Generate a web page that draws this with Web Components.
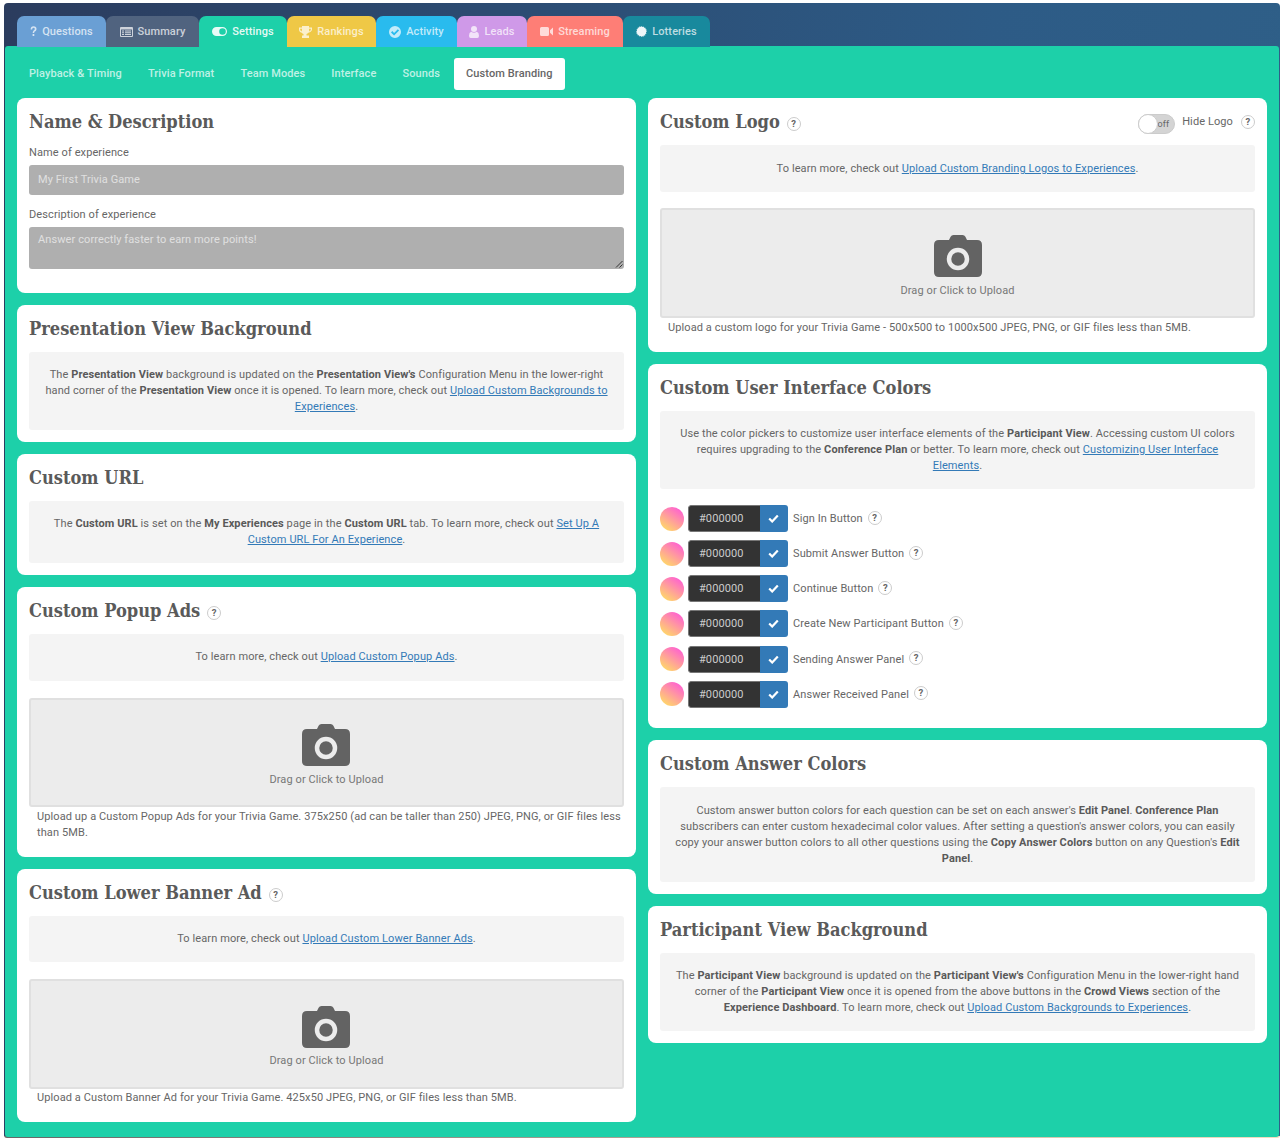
<!DOCTYPE html>
<html lang="en"><head><meta charset="utf-8"><title>Custom Branding</title>
<style>
html,body{margin:0;padding:0;background:#fff}
body{font-family:Roboto,"Liberation Sans",sans-serif;font-size:11px;color:#666;letter-spacing:.1px}
x-info b{font-weight:700;color:#595959}
x-info a{color:#337ab7;text-decoration:underline}
</style></head><body>
<template id="t-shell"><style>
:host{display:block;margin:3px 4px 0;width:1276px;box-sizing:border-box;border-radius:4px 4px 3px 3px;padding:13px 1px 1px 1px;
background:linear-gradient(to right,#666,#f2dcc0) bottom/100% 2px no-repeat,linear-gradient(97deg,#2b3c5e,#2d5b86 70%,#2f6088)}
.tabs{display:flex;padding-left:12px;height:30px}
.panel{background:#1dd0a9;border-radius:3px;padding:12px 12px 15px}
</style><div class="tabs"><slot name="tabs"></slot></div><div class="panel"><slot></slot></div></template>

<template id="t-tab"><style>
:host{display:flex;align-items:center;justify-content:center;gap:5px;height:31px;border-radius:7px 7px 0 0;box-sizing:border-box;font:500 11px/1 Roboto,sans-serif;letter-spacing:.1px;color:rgba(255,255,255,.72);background:var(--c);flex:none}
:host([active]){color:rgba(255,255,255,.9)}
::slotted(svg){display:block;fill:currentColor}
</style><slot name="icon"></slot><slot></slot></template>

<template id="t-subnav"><style>
:host{display:flex;height:32px;margin-bottom:8px}
</style><slot></slot></template>

<template id="t-subitem"><style>
:host{display:flex;align-items:center;box-sizing:border-box;padding:0 12px 2px;margin-right:2px;border-radius:3px;font:500 11px/1 Roboto,sans-serif;letter-spacing:.1px;color:rgba(255,255,255,.72);height:32px}
:host([active]){background:#fff;color:#666}
</style><slot></slot></template>

<template id="t-columns"><style>
:host{display:grid;grid-template-columns:619px 619px;gap:12px;align-items:start}
</style><slot></slot></template>

<template id="t-col"><style>
:host{display:flex;flex-direction:column;gap:12px}
</style><slot></slot></template>

<template id="t-card"><style>
:host{display:block;background:#fff;border-radius:8px;padding:12px 12px var(--pb,12px);box-sizing:border-box;height:var(--h,auto)}
header{display:flex;align-items:center;height:23px;margin-bottom:12px}
h2{margin:0;font:700 18.1px/23px "DejaVu Serif",serif;font-stretch:condensed;color:#5a5a5a;letter-spacing:0}
.help{margin-left:7px;display:flex;margin-top:4px}
.right{margin-left:auto;display:flex;align-items:center}
</style><header><h2></h2><span class="help"></span><span class="right"><slot name="right"></slot></span></header><slot></slot></template>

<template id="t-help"><style>
:host{display:inline-flex;width:14px;height:14px;box-sizing:border-box;border:1px solid #ccc;border-radius:50%;align-items:center;justify-content:center;font:700 9.5px/1 Roboto,sans-serif;color:#666;background:#fff;flex:none}
</style>?</template>

<template id="t-info"><style>
:host{display:block;background:#f4f4f4;border-radius:3px;padding:var(--it,15px) 15px var(--ib,15px);text-align:center;font-size:11px;line-height:16px;color:#666}
</style><slot></slot></template>

<template id="t-field"><style>
:host{display:block}
label{display:block;font-size:11px;line-height:15.7px;margin-bottom:var(--lm,4px);color:#666}
.box{background:#afafaf;border-radius:3px;color:#e0e0e0;font-size:11px;padding:0 9px;height:var(--fh,30px);line-height:var(--fl,30px);position:relative}
svg{position:absolute;right:1px;bottom:1px}
</style><label></label><div class="box"><slot></slot></div></template>

<template id="t-upload"><style>
:host{display:block;margin-top:var(--mt,17px)}
.drop{height:var(--dh,110px);box-sizing:border-box;background:#ececec;border:2px solid #e0e0e0;border-radius:3px;display:flex;flex-direction:column;align-items:center;color:#777;font-size:11px;padding-top:var(--dp,25px)}
svg{display:block;margin:0 var(--cx,0px) var(--sp,7px) 0}
.note{padding:0 0 0 8px;margin:var(--nt,2px) 0 var(--nb,4px);line-height:16px;color:#666}
</style><div class="drop"><svg width="48" height="42" viewBox="0 0 48 42"><path fill="#636363" d="M15 5l1.600-3.200Q17.500 0 19.500 0h9q2 0 2.900 1.800L33 5h10q5 0 5 5v27q0 5-5 5H5q-5 0-5-5V10q0-5 5-5z" /><circle cx="24" cy="24" r="9" fill="none" stroke="#ececec" stroke-width="4.500"/></svg>Drag or Click to Upload</div><div class="note"><slot></slot></div></template>

<template id="t-colors"><style>
:host{display:grid;row-gap:8.15px;margin-top:16px}
</style><slot></slot></template>

<template id="t-color"><style>
:host{display:flex;align-items:center;height:27px}
.dot{width:24px;height:24px;border-radius:50%;background:linear-gradient(215deg,#ff4fe0,#ffe95a);flex:none}
.group{display:flex;width:100px;height:27px;margin-left:4px;border-radius:3px;overflow:hidden;flex:none}
.hex{width:72px;background:#333;border:1px solid #777;border-right:0;border-radius:3px 0 0 3px;box-sizing:border-box;color:#ccc;font-size:11px;line-height:25px;padding-left:10px}
.ok{width:28px;background:#337ab7;display:flex;align-items:center;justify-content:center;padding-right:2px;box-sizing:border-box}
.lab{margin-left:5px;color:#666}
x-help{margin:0 0 2px 5px}
</style><div class="dot"></div><div class="group"><div class="hex">#000000</div><div class="ok"><svg width="11" height="9" viewBox="0 0 11 9"><path d="M1.200 4.500l3 3 5.600-6" fill="none" stroke="#fff" stroke-width="2.200"/></svg></div></div><span class="lab"><slot></slot></span><x-help></x-help></template>

<template id="t-toggle"><style>
:host{display:inline-flex;align-items:center;width:37px;height:20px;margin-top:5px;box-sizing:border-box;border:1px solid #ccc;border-radius:10px;background:#d4d4d4;position:relative;font:9px/1 Roboto,sans-serif;color:#666;justify-content:flex-end;padding-right:5px}
i{position:absolute;left:-1px;top:-1px;width:20px;height:20px;box-sizing:border-box;border:1px solid #ccc;border-radius:50%;background:#fff}
</style><i></i>off</template>

<x-shell>
  <x-tab slot="tabs" style="--c:#6a9fd4;width:89px"><svg slot="icon" viewBox="0 0 7 11" style="width:7px;height:11px"><path d="M.6 3.400Q.7.300 3.500.300q3 0 3 2.700c0 1.500-1 2-1.700 2.600q-.6.500-.6 1.300H2.700q0-1.300.8-2.100c.6-.600 1.300-.9 1.300-1.700q0-1.300-1.300-1.300Q2.200 1.800 2.100 3.500zM2.600 8h1.700v2H2.600z"/></svg>Questions</x-tab>
  <x-tab slot="tabs" style="--c:#50637f;width:93px"><svg slot="icon" viewBox="0 0 13 10" style="width:13px;height:10px"><path fill-rule="evenodd" d="M1 0h11q1 0 1 1v8q0 1-1 1H1q-1 0-1-1V1q0-1 1-1zM1 2.500V9h11V2.500zM2 3.500h2v1H2zM5 3.500h6v1H5zM2 5.300h2v1H2zM5 5.300h6v1H5zM2 7h2v1H2zM5 7h6v1H5z"/></svg>Summary</x-tab>
  <x-tab slot="tabs" active style="--c:#1dd0a9;width:88px"><svg slot="icon" viewBox="0 0 15 9" style="width:15px;height:9px"><path fill-rule="evenodd" d="M4.500 0h6a4.500 4.500 0 0 1 0 9h-6a4.500 4.500 0 0 1 0-9zM10.500 1.200a3.300 3.300 0 1 0 0 6.600 3.300 3.300 0 0 0 0-6.600z"/></svg>Settings</x-tab>
  <x-tab slot="tabs" style="--c:#efc846;width:89px"><svg slot="icon" viewBox="0 0 13 12" style="width:13px;height:12px"><path fill-rule="evenodd" d="M3 0h7v1.500h3v1.700c0 1.800-1.500 3.200-3.700 3.500-.4.600-1 1-1.800 1.300v1.600H10V12H3v-2.400h1.500V8C3.700 7.700 3.100 7.300 2.700 6.700.8 6.400 0 5 0 3.200V1.500h3zM1.200 2.700v.6c0 1 .5 1.800 1.500 2.100Q2.900 4 3 2.700zM11.800 2.700H10q.1 1.300.3 2.700c1-.3 1.500-1.100 1.500-2.100z"/></svg>Rankings</x-tab>
  <x-tab slot="tabs" style="--c:#29bbee;width:81px"><svg slot="icon" viewBox="0 0 12 12" style="width:12px;height:12px"><path fill-rule="evenodd" d="M6 0a6 6 0 1 1 0 12A6 6 0 0 1 6 0zM5.100 9.500l5-5-1.300-1.300-3.700 3.700-1.800-1.800-1.300 1.300z"/></svg>Activity</x-tab>
  <x-tab slot="tabs" style="--c:#cf99e8;width:70px"><svg slot="icon" viewBox="0 0 10 12" style="width:10px;height:12px"><circle cx="5" cy="3" r="3"/><path d="M2.200 5.800Q5 7.800 7.800 5.800 10 6.500 10 9.800 10 12 8.300 12H1.700Q0 12 0 9.800 0 6.500 2.200 5.800z"/></svg>Leads</x-tab>
  <x-tab slot="tabs" style="--c:#fe7e76;width:96px"><svg slot="icon" viewBox="0 0 13 9" style="width:13px;height:9px"><path d="M1.500 0h6Q9 0 9 1.500v6Q9 9 7.500 9h-6Q0 9 0 7.500v-6Q0 0 1.500 0zM10 3.300L13 .6v7.800L10 5.700z"/></svg>Streaming</x-tab>
  <x-tab slot="tabs" style="--c:#18899d;width:87px"><svg slot="icon" viewBox="0 0 12 12" style="width:11px;height:11px"><circle cx="6" cy="6" r="5.100"/><path d="M6 0l1 1.200L8.400.5l.6 1.500 1.500-.1-.1 1.500 1.500.6-.7 1.400L12 6l-1.200 1 .7 1.400-1.500.6.100 1.500-1.500-.1-.6 1.500L7 11.100 6 12l-1-1.200-1.400.7L3 10l-1.500.1L1.600 8.600.1 8 .8 6.600 0 6l1.200-1L.5 3.600 2 3 1.900 1.500l1.500.1L4 .1 5 1.200z"/></svg>Lotteries</x-tab>

  <x-subnav>
    <x-subitem>Playback &amp; Timing</x-subitem><x-subitem>Trivia Format</x-subitem><x-subitem>Team Modes</x-subitem><x-subitem>Interface</x-subitem><x-subitem>Sounds</x-subitem><x-subitem active>Custom Branding</x-subitem>
  </x-subnav>

  <x-columns>
    <x-col>
      <x-card heading="Name &amp; Description" style="--h:195px">
        <x-field label="Name of experience">My First Trivia Game</x-field>
        <x-field label="Description of experience" area style="--fh:42px;--fl:25px;--lm:5px;margin-top:12px">Answer correctly faster to earn more points!</x-field>
      </x-card>
      <x-card heading="Presentation View Background">
        <x-info>The <b>Presentation View</b> background is updated on the <b>Presentation View's</b> Configuration Menu in the lower-right hand corner of the <b>Presentation View</b> once it is opened. To learn more, check out <a href="#">Upload Custom Backgrounds to Experiences</a>.</x-info>
      </x-card>
      <x-card heading="Custom URL">
        <x-info>The <b>Custom URL</b> is set on the <b>My Experiences</b> page in the <b>Custom URL</b> tab. To learn more, check out <a href="#">Set Up A Custom URL For An Experience</a>.</x-info>
      </x-card>
      <x-card heading="Custom Popup Ads" help>
        <x-info style="--ib:16px">To learn more, check out <a href="#">Upload Custom Popup Ads</a>.</x-info>
        <x-upload style="--dh:109px;--dp:24px;--cx:1px">Upload up a Custom Popup Ads for your Trivia Game. 375x250 (ad can be taller than 250) JPEG, PNG, or GIF files less than 5MB.</x-upload>
      </x-card>
      <x-card heading="Custom Lower Banner Ad" help style="--pb:11px">
        <x-info>To learn more, check out <a href="#">Upload Custom Lower Banner Ads</a>.</x-info>
        <x-upload style="--cx:1px;--sp:6px;--nt:1px;--nb:5px">Upload a Custom Banner Ad for your Trivia Game. 425x50 JPEG, PNG, or GIF files less than 5MB.</x-upload>
      </x-card>
    </x-col>
    <x-col>
      <x-card heading="Custom Logo" help>
        <span slot="right" style="display:flex;align-items:center"><x-toggle></x-toggle><span style="margin:0 8px 0 7px">Hide Logo</span><x-help></x-help></span>
        <x-info style="--it:16px">To learn more, check out <a href="#">Upload Custom Branding Logos to Experiences</a>.</x-info>
        <x-upload style="--mt:16px">Upload a custom logo for your Trivia Game - 500x500 to 1000x500 JPEG, PNG, or GIF files less than 5MB.</x-upload>
      </x-card>
      <x-card heading="Custom User Interface Colors" style="--pb:20px">
        <x-info>Use the color pickers to customize user interface elements of the <b>Participant View</b>. Accessing custom UI colors requires upgrading to the <b>Conference Plan</b> or better. To learn more, check out <a href="#">Customizing User Interface Elements</a>.</x-info>
        <x-colors>
          <x-color>Sign In Button</x-color><x-color>Submit Answer Button</x-color><x-color>Continue Button</x-color><x-color>Create New Participant Button</x-color><x-color>Sending Answer Panel</x-color><x-color>Answer Received Panel</x-color>
        </x-colors>
      </x-card>
      <x-card heading="Custom Answer Colors">
        <x-info style="--it:16px">Custom answer button colors for each question can be set on each answer's <b>Edit Panel</b>. <b>Conference Plan</b> subscribers can enter custom hexadecimal color values. After setting a question's answer colors, you can easily copy your answer button colors to all other questions using the <b>Copy Answer Colors</b> button on any Question's <b>Edit Panel</b>.</x-info>
      </x-card>
      <x-card heading="Participant View Background">
        <x-info>The <b>Participant View</b> background is updated on the <b>Participant View's</b> Configuration Menu in the lower-right hand corner of the <b>Participant View</b> once it is opened from the above buttons in the <b>Crowd Views</b> section of the <b>Experience Dashboard</b>. To learn more, check out <a href="#">Upload Custom Backgrounds to Experiences</a>.</x-info>
      </x-card>
    </x-col>
  </x-columns>
</x-shell>
<script>
function el(name,tpl,setup){customElements.define(name,class extends HTMLElement{
  constructor(){super();const r=this.attachShadow({mode:'open'});r.appendChild(document.getElementById(tpl).content.cloneNode(true));}
  connectedCallback(){if(setup)setup(this,this.shadowRoot);}
});}
el('x-help','t-help');
el('x-shell','t-shell');el('x-tab','t-tab');el('x-subnav','t-subnav');el('x-subitem','t-subitem');
el('x-columns','t-columns');el('x-col','t-col');
el('x-card','t-card',(h,r)=>{r.querySelector('h2').textContent=h.getAttribute('heading');
  const s=r.querySelector('.help');if(h.hasAttribute('help')&&!s.firstChild)s.appendChild(document.createElement('x-help'));});
el('x-info','t-info');
el('x-field','t-field',(h,r)=>{r.querySelector('label').textContent=h.getAttribute('label');
  if(h.hasAttribute('area')&&!r.querySelector('svg')){r.querySelector('.box').insertAdjacentHTML('beforeend','<svg width="8" height="8" viewBox="0 0 8 8"><path d="M1 7.500L7.500 1M4.500 7.500L7.500 4.500" stroke="#333" stroke-width="1"/></svg>');}});
el('x-upload','t-upload');el('x-colors','t-colors');el('x-color','t-color');el('x-toggle','t-toggle');
</script>
</body></html>
